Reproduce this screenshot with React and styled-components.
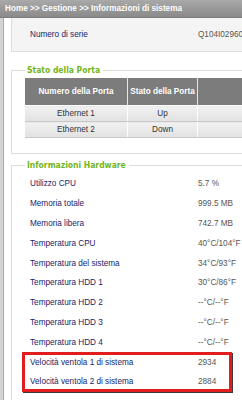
import styled, { createGlobalStyle } from 'styled-components'

const GlobalStyle = createGlobalStyle`
  html, body {
    margin: 0;
    padding: 0;
    background: #ffffff;
    overflow: hidden;
  }
`

const Frame = styled.div`
  width: 320px;
  height: 400px;
  font-family: 'Liberation Sans', Arial, sans-serif;
  font-size: 8.2px;
`

const Breadcrumb = styled.div`
  height: 18px;
  line-height: 17px;
  padding-left: 5px;
  background: linear-gradient(#a9a9a9, #8a8a8a);
  border-bottom: 1px solid #7d7d7d;
  box-sizing: border-box;
  color: #ffffff;
  font-family: 'Liberation Sans', Arial, sans-serif;
  font-size: 8.2px;
  font-weight: bold;
  white-space: nowrap;
`

const Content = styled.div`
  height: 382px;
  border-left: 3px solid #d4d4d4;
  box-shadow: inset 1px 0 #a9a9a9;
  padding-left: 8px;
`

const SerialBox = styled.div`
  display: flex;
  align-items: center;
  height: 34px;
  padding-left: 18px;
  background: #f4f4f4;
  border: 1px solid #dcdcdc;
  border-top: none;
  border-right: none;
  box-sizing: border-box;
`

const Fieldset = styled.fieldset`
  margin: ${(p) => p.$top}px 0 0;
  padding: ${(p) => p.$padTop}px 0 ${(p) => p.$bottom}px 13px;
  border: 1px solid #dcdcdc;
  border-right: none;
  min-width: 0;
`

const Legend = styled.legend`
  padding: 0 3px 0 2px;
  color: #72b51c;
  font-family: 'DejaVu Sans Condensed', 'DejaVu Sans', sans-serif;
  font-size: 8.5px;
  font-weight: bold;
  line-height: 11px;
`

const PortTable = styled.table`
  width: 300px;
  margin-top: 2px;
  border-collapse: collapse;
  text-align: center;
  font-size: 8.2px;
`

const HeadCell = styled.th`
  height: 27px;
  padding: 0;
  background: #7c7c7c;
  color: #ffffff;
  font-weight: bold;
  border-right: 1px solid #e6e6e6;
  width: ${(p) => p.$width}px;
`

const Cell = styled.td`
  height: 15px;
  padding: 0;
  background: linear-gradient(#f1f1f1, #e2e2e2);
  color: #333333;
  border-right: 1px solid #ffffff;
  border-top: 1px solid #ffffff;
  border-bottom: 1px solid #c8c8c8;
`

const InfoRow = styled.div`
  display: flex;
  align-items: center;
  height: 19.8px;
  padding-left: 5px;
`

const Label = styled.span`
  width: 168px;
  color: #17256a;
`

const Value = styled.span`
  color: #555555;
  white-space: nowrap;
`

const Highlight = styled.div`
  width: 210px;
  margin-left: -3px;
  padding-left: 3px;
  box-sizing: border-box;
  box-shadow: inset 0 0 0 3px #e11d1d, 1px 1px 0 #3a3a3a;
`

const hardware = [
  ['Utilizzo CPU', '5.7 %'],
  ['Memoria totale', '999.5 MB'],
  ['Memoria libera', '742.7 MB'],
  ['Temperatura CPU', '40°C/104°F'],
  ['Temperatura del sistema', '34°C/93°F'],
  ['Temperatura HDD 1', '30°C/86°F'],
  ['Temperatura HDD 2', '--°C/--°F'],
  ['Temperatura HDD 3', '--°C/--°F'],
  ['Temperatura HDD 4', '--°C/--°F']
]

const fans = [
  ['Velocità ventola 1 di sistema', '2934'],
  ['Velocità ventola 2 di sistema', '2884']
]

const ports = [
  ['Ethernet 1', 'Up', '2'],
  ['Ethernet 2', 'Down', '2']
]

function App() {
  return (
    <Frame>
      <GlobalStyle />
      <Breadcrumb>Home &gt;&gt; Gestione &gt;&gt; Informazioni di sistema</Breadcrumb>
      <Content>
        <SerialBox>
          <Label>Numero di serie</Label>
          <Value>Q104I02960</Value>
        </SerialBox>

        <Fieldset $top={13} $padTop={0} $bottom={15}>
          <Legend>Stato della Porta</Legend>
          <PortTable>
            <thead>
              <tr>
                <HeadCell $width={102}>Numero della Porta</HeadCell>
                <HeadCell $width={69}>Stato della Porta</HeadCell>
                <HeadCell>Velocità</HeadCell>
              </tr>
            </thead>
            <tbody>
              {ports.map(([name, state, speed]) => (
                <tr key={name}>
                  <Cell>{name}</Cell>
                  <Cell>{state}</Cell>
                  <Cell>{speed}</Cell>
                </tr>
              ))}
            </tbody>
          </PortTable>
        </Fieldset>

        <Fieldset $top={6} $padTop={3} $bottom={10}>
          <Legend>Informazioni Hardware</Legend>
          {hardware.map(([label, value]) => (
            <InfoRow key={label}>
              <Label>{label}</Label>
              <Value>{value}</Value>
            </InfoRow>
          ))}
          <Highlight>
            {fans.map(([label, value]) => (
              <InfoRow key={label}>
                <Label>{label}</Label>
                <Value>{value}</Value>
              </InfoRow>
            ))}
          </Highlight>
        </Fieldset>
      </Content>
    </Frame>
  )
}

export default App
